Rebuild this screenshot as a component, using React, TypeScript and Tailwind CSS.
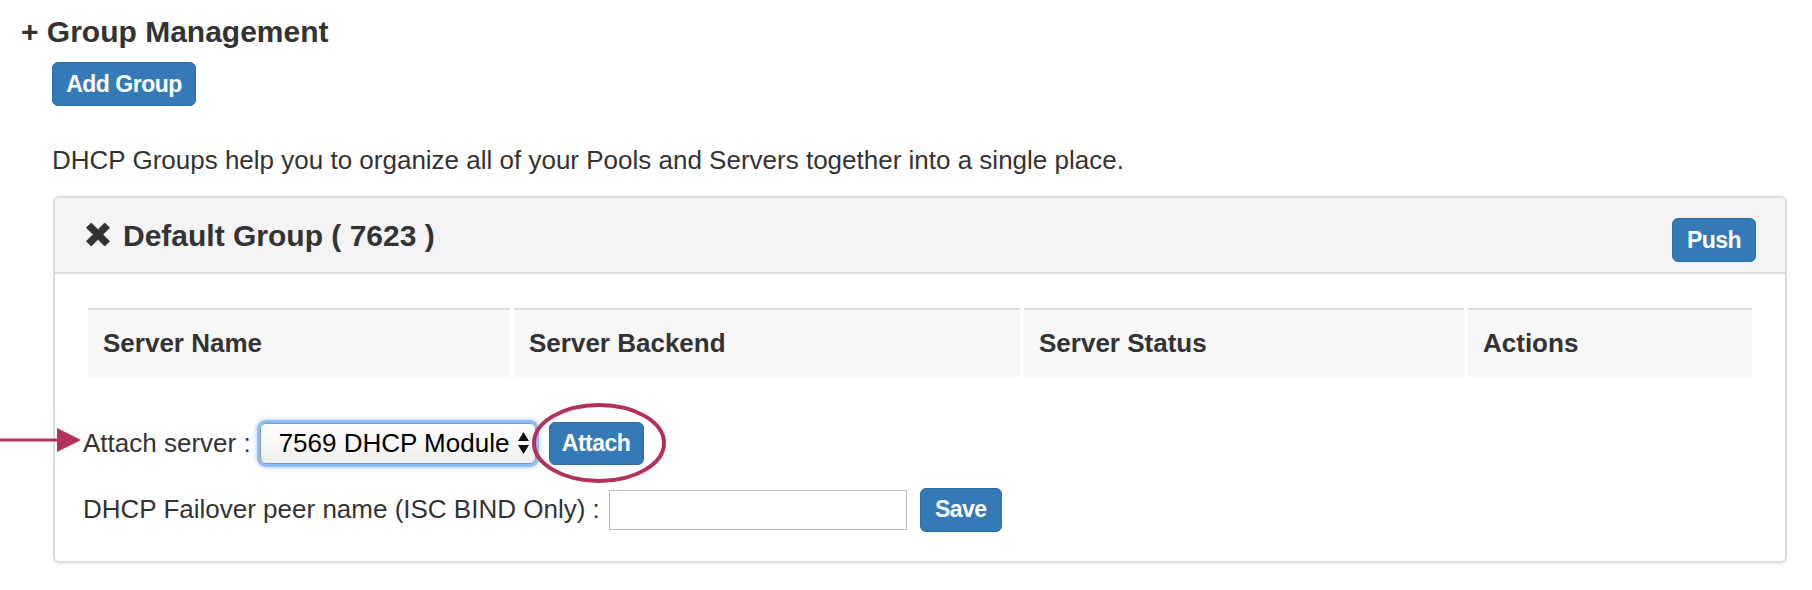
export default function App() {
  const headers = [
    { label: "Server Name" },
    { label: "Server Backend" },
    { label: "Server Status" },
    { label: "Actions" },
  ];

  return (
    <div className="relative w-[1812px] h-[590px] overflow-hidden bg-white text-[#333] font-['Liberation_Sans',Arial,sans-serif]">
      <h3 className="pt-[14px] pl-[21px] text-[30px] leading-[36px] font-bold">
        + Group Management
      </h3>

      <div className="pl-[52px] pr-[25px]">
        <div className="mt-[12px] flex">
          <button className="flex h-[44px] w-[144px] items-center justify-center rounded-[6px] border border-[#2e6da4] bg-[#337ab7] text-[23px] font-bold leading-none tracking-[-0.5px] text-white">
            Add Group
          </button>
        </div>

        <p className="mt-[36px] text-[26px] leading-[36px]">
          DHCP Groups help you to organize all of your Pools and Servers together into a single place.
        </p>

        <div className="mt-[18px] ml-[1px] rounded-[6px] border-2 border-[#ddd] bg-white shadow-[0_2px_2px_rgba(0,0,0,0.06)]">
          {/* panel heading */}
          <div className="flex items-start justify-between rounded-t-[4px] border-b-2 border-[#ddd] bg-[#f4f4f4] pt-[20px] pb-[10px] pl-[31px] pr-[29px]">
            <h4 className="flex h-[36px] items-center gap-[13px] text-[30px] font-bold leading-[36px]">
              <svg width="24" height="23" viewBox="0 0 24 24" className="mb-[4px]">
                <path
                  d="M0 5 L5 0 L12 7 L19 0 L24 5 L17 12 L24 19 L19 24 L12 17 L5 24 L0 19 L7 12 Z"
                  fill="#333"
                  stroke="#333"
                  strokeWidth="1"
                  strokeLinejoin="round"
                />
              </svg>
              <span>Default Group ( 7623 )</span>
            </h4>
            <button className="flex h-[44px] w-[84px] items-center justify-center rounded-[6px] border border-[#2e6da4] bg-[#337ab7] text-[23px] font-bold leading-none tracking-[-0.5px] text-white">
              Push
            </button>
          </div>

          {/* panel body */}
          <div className="pt-[34px] pb-[29px] pl-[28px] pr-[33px]">
            <div className="ml-[5px] grid grid-cols-[422px_506px_440px_284px] gap-x-[4px]">
              {headers.map((h) => (
                <div
                  key={h.label}
                  className="flex h-[69px] items-center border-t-2 border-[#ddd] bg-[#f8f8f8] pl-[15px] text-[26px] font-bold"
                >
                  {h.label}
                </div>
              ))}
            </div>

            <div className="mt-[43px] flex h-[46px] items-center text-[26px]">
              <span>Attach server :</span>
              <div className="ml-[9px] flex h-[41px] w-[276px] items-center justify-between rounded-[6px] border border-[#7d9cc4] bg-gradient-to-b from-white to-[#efefef] pl-[18px] pr-[6px] text-black shadow-[0_0_0_3px_#8fbdf2,0_0_4px_4px_#c2dbf8]">
                <span>7569 DHCP Module</span>
                <svg width="11" height="22" viewBox="0 0 11 22">
                  <polygon points="5.5,0 11,9 0,9" fill="#111" />
                  <polygon points="0,13 11,13 5.5,22" fill="#111" />
                </svg>
              </div>
              <button className="ml-[13px] flex h-[43px] w-[95px] items-center justify-center rounded-[6px] border border-[#2e6da4] bg-[#337ab7] text-[23px] font-bold leading-none tracking-[-0.5px] text-white">
                Attach
              </button>
            </div>

            <div className="mt-[21px] flex h-[45px] items-center text-[26px]">
              <span>DHCP Failover peer name (ISC BIND Only) :</span>
              <input className="ml-[9px] h-[40px] w-[298px] border border-[#bbb] bg-white outline-none" />
              <button className="ml-[13px] flex h-[44px] w-[82px] items-center justify-center rounded-[6px] border border-[#2e6da4] bg-[#337ab7] text-[23px] font-bold leading-none tracking-[-0.5px] text-white">
                Save
              </button>
            </div>
          </div>
        </div>
      </div>

      {/* annotation arrow */}
      <svg className="absolute left-0 top-[426px]" width="82" height="28" viewBox="0 0 82 28">
        <line x1="0" y1="14" x2="58" y2="14" stroke="#b3305c" strokeWidth="3" />
        <polygon points="57,2 81,14 57,26" fill="#b3305c" />
      </svg>

      {/* annotation circle */}
      <svg className="absolute left-[530px] top-[401px]" width="138" height="84" viewBox="0 0 138 84">
        <ellipse cx="69" cy="42" rx="65" ry="38" fill="none" stroke="#b3305c" strokeWidth="4" />
      </svg>
    </div>
  );
}
